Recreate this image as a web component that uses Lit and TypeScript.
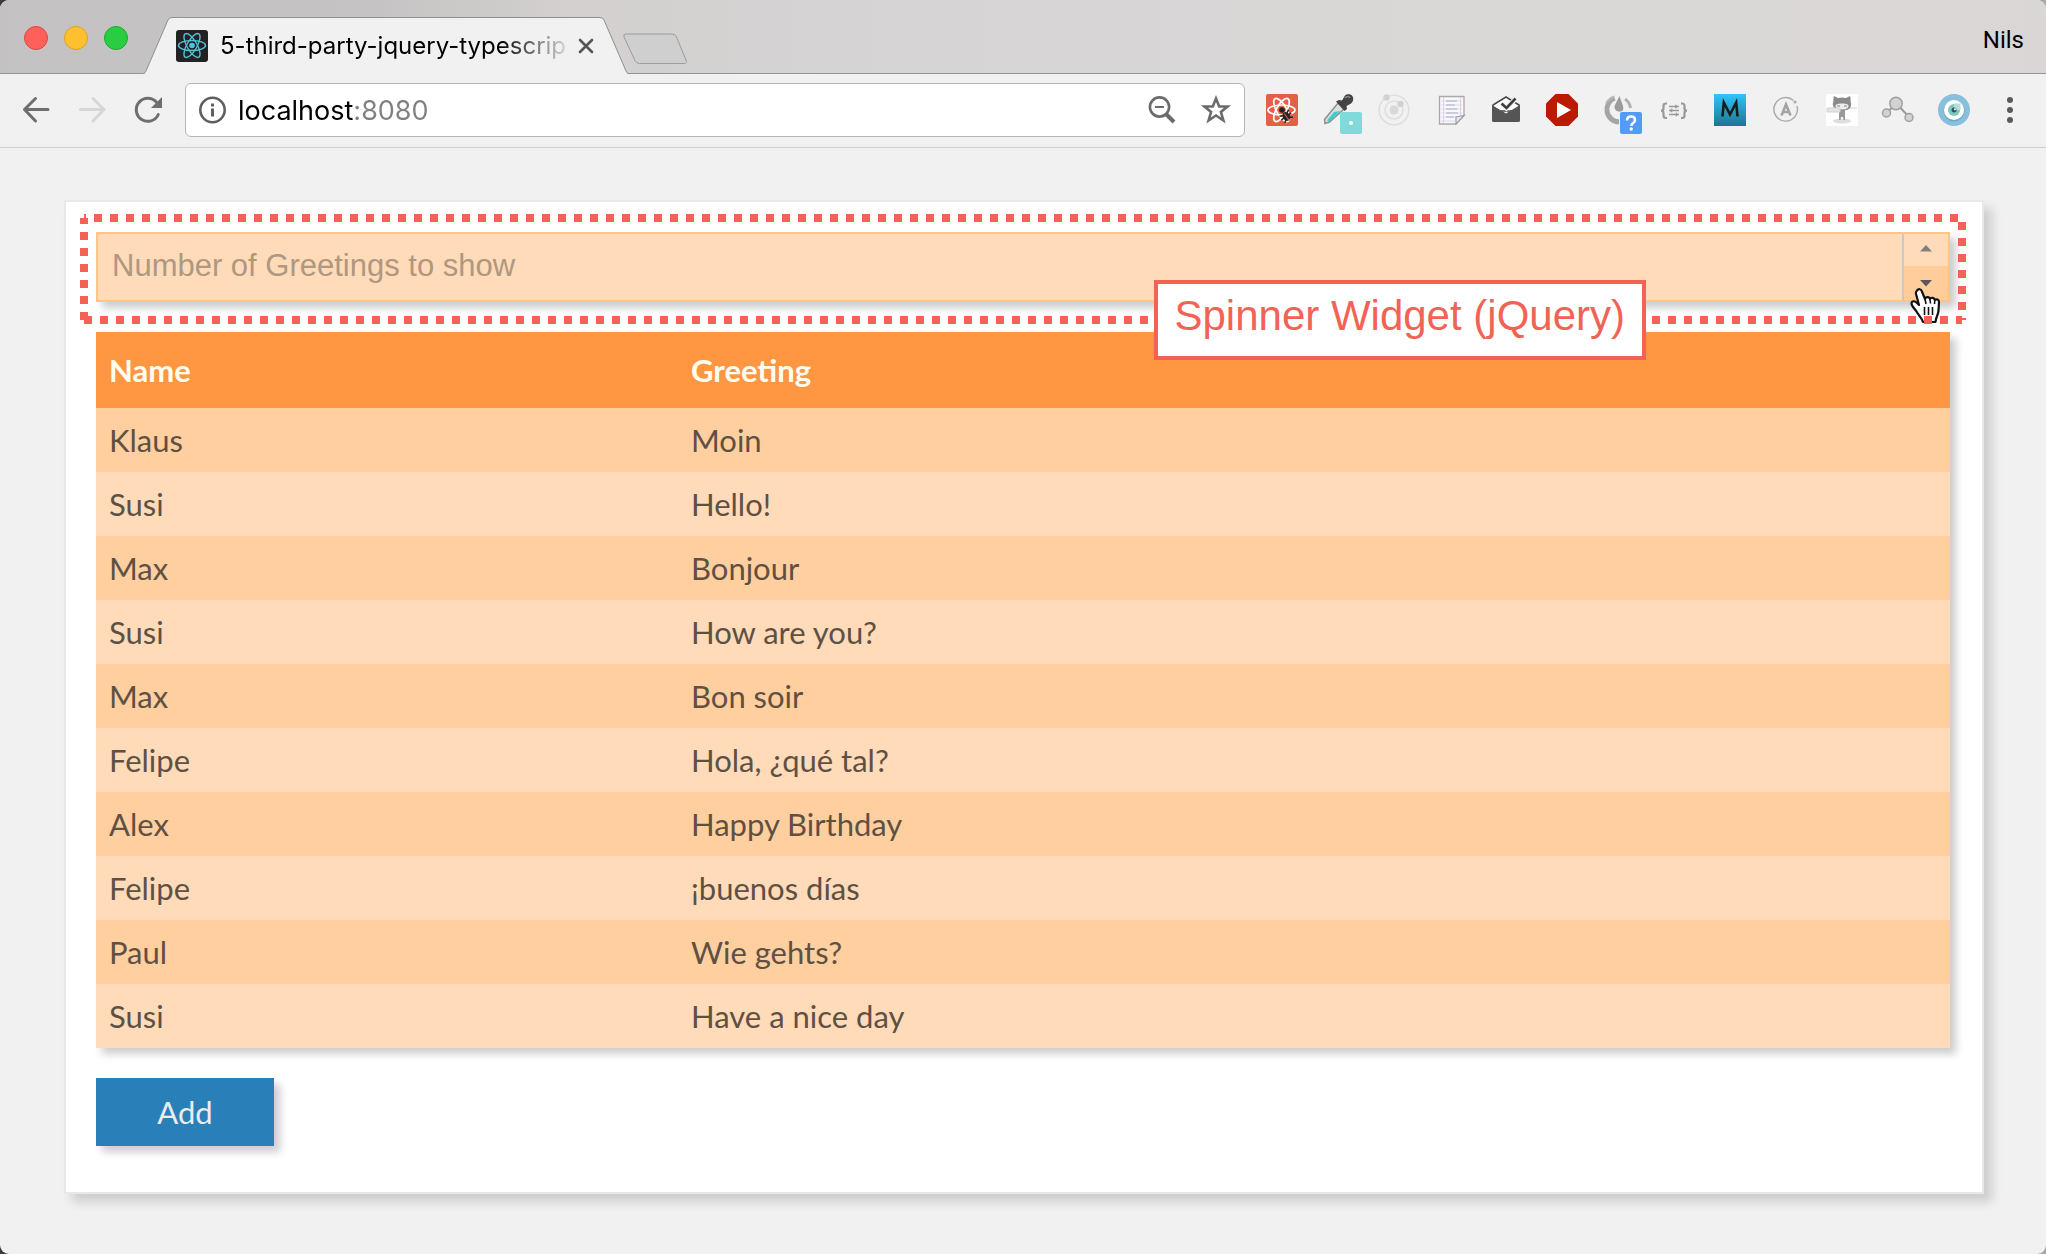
import { LitElement, html, svg, css } from "lit";
import { customElement, property, state } from "lit/decorators.js";

const FAVICON = svg`
  <rect width="32" height="32" rx="3" fill="#222"/>
  <g fill="none" stroke="#53c1de" stroke-width="1.4">
    <ellipse cx="16" cy="15.500" rx="13.500" ry="5"/>
    <ellipse cx="16" cy="15.500" rx="13.500" ry="5" transform="rotate(60 16 15.500)"/>
    <ellipse cx="16" cy="15.500" rx="13.500" ry="5" transform="rotate(120 16 15.500)"/>
  </g>
  <circle cx="16" cy="15.500" r="2.800" fill="#53c1de"/>`;

const BACK = svg`<path d="M28 15.500H4.500M15.500 4.500 4.500 15.500l11 11.500" fill="none" stroke="#6e6e6e" stroke-width="3" stroke-linecap="round" stroke-linejoin="round"/>`;
const FORWARD = svg`<path d="M4.500 15.500H28M17 4.500 28 15.500 17 27" fill="none" stroke="#d6d6d6" stroke-width="3" stroke-linecap="round" stroke-linejoin="round"/>`;
const RELOAD = svg`
  <path d="M26.300 20.500A11.500 11.500 0 1 1 24.500 8.300" fill="none" stroke="#6e6e6e" stroke-width="3" stroke-linecap="round"/>
  <path d="M30 3v11H19z" fill="#6e6e6e"/>`;
const INFO = svg`
  <circle cx="13.500" cy="14" r="12.200" fill="none" stroke="#5f5f5f" stroke-width="2.600"/>
  <path d="M12 12.500h3v8h-3zM12 7.500h3v3h-3z" fill="#5f5f5f"/>`;
const ZOOM_OUT = svg`
  <circle cx="11.500" cy="11" r="9.600" fill="none" stroke="#6b6b6b" stroke-width="2.600"/>
  <path d="M7 11h9" stroke="#6b6b6b" stroke-width="2"/>
  <path d="M18 18l8 8" stroke="#6b6b6b" stroke-width="4"/>`;
const STAR = svg`<path d="M14 2.500l3.200 8h8.300l-6.600 5.400 2.500 8.600-7.400-5-7.400 5 2.500-8.600L2.500 10.500h8.300z" fill="none" stroke="#6b6b6b" stroke-width="2.600"/>`;

interface Extension {
  label: string;
  art: unknown;
}

const EXTENSIONS: Extension[] = [
  {
    label: "React debugger",
    art: svg`
      <rect width="32" height="32" rx="2" fill="#e35f47"/>
      <g fill="none" stroke="#fff" stroke-width="1.700">
        <ellipse cx="15.500" cy="16" rx="13.500" ry="5"/>
        <ellipse cx="15.500" cy="16" rx="13" ry="5" transform="rotate(60 15.500 16)"/>
        <ellipse cx="15.500" cy="16" rx="13" ry="5" transform="rotate(120 15.500 16)"/>
      </g>
      <circle cx="16" cy="16" r="2.800" fill="#272324"/>
      <g transform="rotate(-35 20 22)">
        <ellipse cx="20" cy="22.500" rx="3.600" ry="4.600" fill="#272324"/>
        <path d="M14.500 18.500l3 1.500M14 22.500H26M15 27l3-2M25.500 18.500l-3 1.500M25 27l-3-2" stroke="#272324" stroke-width="1.600"/>
        <path d="M20 19v8" stroke="#e35f47" stroke-width="1"/>
      </g>`,
  },
  {
    label: "Colour picker",
    art: svg`
      <path d="M3 29.500l-.500-4L16 9l6 6L7.500 28z" fill="#d9dede" stroke="#8b8f8f" stroke-width="1.500"/>
      <path d="M5 26.500L12 18l6-1L7.500 27.500z" fill="#35cfd0"/>
      <path d="M14 7.500l3-1.500 3 .500L23 1.500c2-2 5.500-1.500 7 0 2 2.500 1.500 6-1 8L24.500 12l.500 3-2.500 2z" fill="#434343"/>
      <path d="M23 4c2-2 4-2 5 0" stroke="#8c8c8c" stroke-width="1.500" fill="none"/>
      <rect x="18" y="18" width="22" height="22" rx="2" fill="#80dada"/>
      <circle cx="29" cy="29" r="2" fill="#fff"/>`,
  },
  {
    label: "Orbit",
    art: svg`
      <g fill="none" stroke="#dedede" stroke-width="1.600">
        <circle cx="16" cy="16" r="14.800"/>
        <circle cx="16" cy="16" r="9"/>
      </g>
      <circle cx="16" cy="16" r="4.500" fill="#d9d9d9"/>
      <circle cx="8.500" cy="3.500" r="3.200" fill="#d2d2d2"/>
      <circle cx="22.500" cy="10" r="3.200" fill="#d2d2d2"/>`,
  },
  {
    label: "Notes",
    art: svg`
      <g transform="translate(2 0)">
        <path d="M3.500 2.500h24.500v19l-8 8.500H3.500z" fill="#f8f8fb" stroke="#a9a9a9" stroke-width="1.300"/>
        <path d="M5 7h21M5 11h21M5 15h21M5 19h21M5 23h16M5 27h14" stroke="#d6dbee" stroke-width="1"/>
        <path d="M7.500 3v26M24.500 3v19" stroke="#ecc9e8" stroke-width="1"/>
        <path d="M10 7h11M10 11h9M10 15h11M10 19h12M10 23h8" stroke="#c0c4d0" stroke-width="1.300"/>
        <path d="M28 21.500l-8 8.500v-7z" fill="#eaeaea" stroke="#a0a0a0" stroke-width="1.200"/>
      </g>`,
  },
  {
    label: "Mail checker",
    art: svg`
      <path d="M3 11L16 3l13 8v6H3z" fill="#fff" stroke="#4a4a4a" stroke-width="1.500"/>
      <path d="M2 11l14 8.500L30 11v15.500q0 1.500-1.500 1.500h-25Q2 28 2 26.500z" fill="#555"/>
      <path d="M12 9.500l4.500 4.500L26 4.500" fill="none" stroke="#f1f1f1" stroke-width="5"/>
      <path d="M11.500 9.500l5 4.500L25.500 4.500" fill="none" stroke="#3f3f3f" stroke-width="2.600"/>`,
  },
  {
    label: "Video player",
    art: svg`
      <path d="M9.500 0h13L32 9.500v13L22.500 32h-13L0 22.500v-13z" fill="#bb1a00"/>
      <path d="M11 8l14 8-14 8z" fill="#fff"/>`,
  },
  {
    label: "Page status",
    art: svg`
      <path d="M12.500 4A12.500 12.500 0 0 0 17 28" fill="none" stroke="#a5a5a5" stroke-width="5"/>
      <path d="M12.500 2.500Q7 4.500 4 9" fill="none" stroke="#b8b8b8" stroke-width="2"/>
      <path d="M23 5A13 13 0 0 1 28.500 14" fill="none" stroke="#b2b2b2" stroke-width="3"/>
      <path d="M17.500 2l3.500 10c1 5-1.500 6-4.500 5.500s-5-3.500-3.500-6.500z" fill="#9c9c9c"/>
      <rect x="18" y="18" width="22" height="22" rx="2" fill="#529bf8"/>
      <path d="M25 26.500q0-4 4-4t4 3.500q0 2-2 3.200-1.700 1-1.700 2.800" fill="none" stroke="#fff" stroke-width="2.600"/>
      <circle cx="29.200" cy="35" r="1.700" fill="#fff"/>`,
  },
  {
    label: "JSON viewer",
    art: svg`
      <g fill="none" stroke="#999" stroke-width="2.200">
        <path d="M9 9.500H8q-2.500 0-2.500 2.500v2.500q0 2.200-2.500 2.200 2.500 0 2.500 2.300v2.500Q5.500 24 8 24h1"/>
        <path d="M23 9.500h1q2.500 0 2.500 2.500v2.500q0 2.200 2.500 2.200-2.500 0-2.500 2.300v2.500q0 2.500-2.500 2.500h-1"/>
      </g>
      <path d="M11 12.500h10M11 16.500h10M11 20.500h10M18 10.800v3.400M13.500 14.800v3.400M18.500 18.800v3.400" stroke="#999" stroke-width="1.600"/>`,
  },
  {
    label: "Markdown",
    art: svg`
      <defs><linearGradient id="md" x2="0" y2="1"><stop stop-color="#30c5fb"/><stop offset="1" stop-color="#1c7592"/></linearGradient></defs>
      <rect width="32" height="32" fill="url(#md)"/>
      <path d="M8.500 22.500L9.800 8.500 16 20.500 22.200 8.500 23.500 22.500" fill="none" stroke="#1b1b1b" stroke-width="2.600"/>`,
  },
  {
    label: "Apollo tools",
    art: svg`
      <path d="M23.500 6.500A11.800 11.800 0 1 0 27 12" fill="none" stroke="#a8a8a8" stroke-width="1.400"/>
      <circle cx="25" cy="8" r="1.500" fill="#a8a8a8"/>
      <path d="M11.500 21.500l4.500-11 4.500 11M13.500 18h5" fill="none" stroke="#a4a4a4" stroke-width="2.600"/>`,
  },
  {
    label: "Octocat",
    art: svg`
      <rect width="32" height="32" fill="#fff"/>
      <ellipse cx="16" cy="27" rx="9" ry="2.600" fill="#dedede"/>
      <path d="M13 16h6v10h-1.500l-.500-3h-2l-.500 3H13zM12 20l-3-1" fill="#9a9a9a"/>
      <path d="M8 2l4 2q4-1 8 0l4-2q1 3 .500 5 1.500 3 0 6.500-1.500 3-8.500 3t-8.500-3q-1.500-3.500 0-6.500Q7 5 8 2z" fill="#8a8a8a"/>
      <path d="M9.500 11q2-2 6.500-1.500 4.500-.500 6.500 1.500.500 4.500-6.500 4.500T9.500 11z" fill="#ededed"/>
      <path d="M11 12h3M18 12h3" stroke="#888" stroke-width="1"/>
      <path d="M1 14h13v4H1zM24 14h7" fill="#e4e4e4" stroke="#d4d4d4" stroke-width="1"/>`,
  },
  {
    label: "Graph",
    art: svg`
      <path d="M5 19L14 9l13 14" fill="none" stroke="#999" stroke-width="2"/>
      <g fill="#d2d2d2" stroke="#a0a0a0" stroke-width="1.500">
        <circle cx="14" cy="9.500" r="6.200"/>
        <circle cx="4.500" cy="19" r="4"/>
        <circle cx="27" cy="23.500" r="4"/>
      </g>`,
  },
  {
    label: "Ghost eye",
    art: svg`
      <circle cx="16" cy="16" r="16" fill="#87bfdd"/>
      <circle cx="16" cy="17" r="10.500" fill="#6fa9c8"/>
      <circle cx="16" cy="16" r="10" fill="#fff"/>
      <circle cx="16" cy="16" r="6" fill="#7bcbb8"/>
      <path d="M16 16V9.500h6.500V16z" fill="#b4e0d6"/>
      <circle cx="16" cy="16" r="2.500" fill="#33566e"/>
      <circle cx="17" cy="15.300" r="1" fill="#fff"/>`,
  },
];

const MENU = svg`<g fill="#5a5a5a"><circle cx="16" cy="6" r="3"/><circle cx="16" cy="16" r="3"/><circle cx="16" cy="26" r="3"/></g>`;

const svg32 = (art: unknown) => html`<svg class="icon" viewBox="0 0 32 32" aria-hidden="true">${art}</svg>`;
const svg28 = (art: unknown) => html`<svg class="icon small" viewBox="0 0 28 28" aria-hidden="true">${art}</svg>`;

const resets = css`
  * { box-sizing: border-box; }
  button, input {
    margin: 0;
    padding: 0;
    border: 0;
    border-radius: 0;
    background: none;
    font: inherit;
    color: inherit;
    outline: 0;
  }
  button { cursor: pointer; }
`;

@customElement("browser-bar")
export class BrowserBar extends LitElement {
  static styles = [
    resets,
    css`
      :host {
        display: block;
        font-family: Inter, "Liberation Sans", sans-serif;
        color: #000;
      }
      .titlebar {
        display: flex;
        align-items: flex-end;
        height: 74px;
        padding: 0 22px 0 24px;
        background: linear-gradient(90deg, #c3c1c1 0, #c5c3c3 18%, #d3d0cf 28%, #d6d4d5 45%, #d9d8d6 75%, #dad6d6);
        box-shadow: inset 0 -1px #959393;
      }
      .lights {
        display: flex;
        gap: 16px;
        margin: 0 16px 24px 0;
      }
      .light {
        width: 24px;
        height: 24px;
        border: 1px solid #e2463f;
        border-radius: 50%;
        background: #ff6059;
      }
      .light.minimise { border-color: #dfa023; background: #ffc02f; }
      .light.zoom { border-color: #1aab2c; background: #29cd42; }
      .tab {
        position: relative;
        display: flex;
        align-items: center;
        flex: 0 1 484px;
        min-width: 0;
        height: 57px;
        padding: 0 28px 0 32px;
      }
      .tab-shape {
        position: absolute;
        inset: 0;
        width: 100%;
        height: 100%;
      }
      .favicon, .title, .close { position: relative; }
      .title {
        flex: 1;
        min-width: 0;
        margin-left: 12px;
        white-space: nowrap;
        font-size: 24px;
        line-height: 32px;
        -webkit-mask-image: linear-gradient(90deg, #000 80%, transparent 102%);
        mask-image: linear-gradient(90deg, #000 80%, transparent 102%);
      }
      .close { display: flex; margin-left: 4px; }
      .new-tab {
        display: flex;
        margin: 0 auto 9px -6px;
      }
      .profile {
        align-self: center;
        padding-top: 6px;
        font-family: Roboto, "Liberation Sans", sans-serif;
        font-size: 24px;
        font-weight: 400;
        line-height: 28px;
      }
      .toolbar {
        display: flex;
        align-items: center;
        gap: 21px;
        height: 74px;
        padding: 0 20px 1px;
        background: #f1f1f1;
        border-bottom: 1px solid #d0d0d0;
      }
      .group { display: flex; gap: 24px; }
      .tool { display: flex; }
      .icon {
        display: block;
        flex: none;
        width: 32px;
        height: 32px;
        overflow: visible;
      }
      .icon.small { width: 28px; height: 28px; }
      .address {
        display: flex;
        align-items: center;
        flex: 1;
        min-width: 0;
        height: 54px;
        padding: 0 14px 0 13px;
        background: #fff;
        border: 1px solid #b5b5b5;
        border-radius: 6px;
      }
      .url {
        flex: 1;
        min-width: 0;
        margin: 0 12px 0 11px;
        padding-top: 2px;
        font-family: Inter, "Liberation Sans", sans-serif;
        font-size: 27px;
        line-height: 40px;
        color: transparent;
        caret-color: #000;
        background: linear-gradient(90deg, #000 115px, #808080 115px);
        -webkit-background-clip: text;
        background-clip: text;
      }
      .actions { display: flex; gap: 26px; }
    `,
  ];

  render() {
    return html`
      <div class="titlebar">
        <div class="lights">
          <button class="light" aria-label="Close window"></button>
          <button class="light minimise" aria-label="Minimise window"></button>
          <button class="light zoom" aria-label="Zoom window"></button>
        </div>
        <div class="tab">
          <svg class="tab-shape" viewBox="0 0 484 57" preserveAspectRatio="none" aria-hidden="true">
            <path d="M0 57q1-1 2-3L24 3q1-2.500 4-2.500h428q3 0 4 2.500l22 51q1 2 2 3z" fill="#f1f1f1"/>
            <path d="M0 56.500q1-.500 2-2.500L24 3q1-2.500 4-2.500h428q3 0 4 2.500l22 51q1 2 2 2.500" fill="none" stroke="#8f8f8f"/>
          </svg>
          <svg class="icon favicon" viewBox="0 0 32 32" aria-hidden="true">${FAVICON}</svg>
          <span class="title">5-third-party-jquery-typescrip</span>
          <button class="close" aria-label="Close tab">
            <svg class="icon small" viewBox="0 0 28 28"><path d="M8 8l12 12M20 8L8 20" stroke="#555" stroke-width="2.600" stroke-linecap="round"/></svg>
          </button>
        </div>
        <button class="new-tab" aria-label="New tab">
          <svg width="66" height="32" viewBox="0 0 66 32">
            <path d="M4 1h46q3 0 4.500 3L64 27q1.500 3.500-1.500 3.500h-45q-3 0-4.500-3L2 4Q1 1 4 1z" fill="#cfcfcf" stroke="#9c9c9c"/>
          </svg>
        </button>
        <button class="profile">Nils</button>
      </div>
      <div class="toolbar">
        <div class="group">
          <button class="tool" aria-label="Back">${svg32(BACK)}</button>
          <button class="tool" aria-label="Forward">${svg32(FORWARD)}</button>
          <button class="tool" aria-label="Reload">${svg32(RELOAD)}</button>
        </div>
        <div class="address">
          ${svg28(INFO)}
          <input class="url" type="text" aria-label="Address" .value=${"localhost:8080"} />
          <div class="actions">
            <button class="tool" aria-label="Zoom">${svg28(ZOOM_OUT)}</button>
            <button class="tool" aria-label="Bookmark">${svg28(STAR)}</button>
          </div>
        </div>
        <div class="group">
          ${EXTENSIONS.map((e) => html`<button class="tool" aria-label=${e.label}>${svg32(e.art)}</button>`)}
          <button class="tool" aria-label="Menu">${svg32(MENU)}</button>
        </div>
      </div>
    `;
  }
}

@customElement("greeting-spinner")
export class GreetingSpinner extends LitElement {
  @property() placeholder = "";
  @state() private value = "";

  static styles = [
    resets,
    css`
      :host { display: block; position: relative; }
      .spinner {
        display: flex;
        height: 70px;
        background: #ffdbba;
        border: 2px solid #ffc488;
        box-shadow: 6px 6px 8px rgba(0, 0, 0, 0.2);
      }
      .count {
        flex: 1;
        min-width: 0;
        padding: 0 14px 2px;
        font-family: "Liberation Sans", Arial, sans-serif;
        font-size: 31px;
        color: #5d4f44;
      }
      .count::placeholder { color: #b0977f; opacity: 1; }
      .steps {
        display: flex;
        flex-direction: column;
        width: 46px;
        border-left: 2px solid #c8c8c8;
      }
      .step {
        display: flex;
        flex: 1;
        align-items: flex-start;
        justify-content: center;
        padding-top: 11px;
      }
      .step.active {
        padding-top: 14px;
        background: #ffcd9c;
      }
      .outline {
        position: absolute;
        inset: -14px -12px -18px;
        pointer-events: none;
      }
      .outline svg {
        display: block;
        width: 100%;
        height: 100%;
        overflow: visible;
      }
      .outline line {
        stroke: #f26355;
        stroke-width: 8px;
        stroke-dasharray: 8px 8px;
      }
      .callout {
        position: absolute;
        top: 48px;
        right: 304px;
        padding: 8px 17px 16px;
        background: #fff;
        border: 4px solid #f26355;
        font-family: "Liberation Sans", Arial, sans-serif;
        font-size: 42px;
        line-height: 48px;
        color: #f26355;
        white-space: nowrap;
      }
      .pointer {
        position: absolute;
        top: 55px;
        right: 7px;
        width: 34px;
        height: 38px;
        pointer-events: none;
      }
    `,
  ];

  private step(delta: number) {
    this.value = String(Math.max(0, (Number(this.value) || 0) + delta));
  }

  render() {
    return html`
      <div class="spinner">
        <input
          class="count"
          type="text"
          aria-label=${this.placeholder}
          placeholder=${this.placeholder}
          .value=${this.value}
          @input=${(e: Event) => (this.value = (e.target as HTMLInputElement).value)}
        />
        <div class="steps">
          <button class="step" aria-label="Increase" @click=${() => this.step(1)}>
            <svg width="12" height="7" viewBox="0 0 12 7"><path d="M6 0l6 6.500H0z" fill="#808080"/></svg>
          </button>
          <button class="step active" aria-label="Decrease" @click=${() => this.step(-1)}>
            <svg width="12" height="7" viewBox="0 0 12 7"><path d="M0 0h12L6 6.500z" fill="#5a5a5a"/></svg>
          </button>
        </div>
      </div>
      <svg class="pointer" viewBox="0 0 34 38" aria-hidden="true">
        <path
          d="M8 3.500c1.500-2 4-1.500 4.700.500L16 12c.500-2.500 4.500-2.500 5 0 1-2 4.500-1.500 4.800 1 1.500-1.500 4.200-.500 4.200 2l-.500 9c-.500 4-2.500 6-3 11H14c-1-4-4-6-6.500-10.500-2-3-5-5.500-5-8 0-2.500 3-3 5-1l2.500 2.500L7 7c-.500-1.500 0-2.500 1-3.500z"
          fill="#fff" stroke="#111" stroke-width="2.200" stroke-linejoin="round"/>
        <path d="M15.500 20v8M19.500 20v8M23.500 20v8M16 12l1 5M21 12.500l.500 4M25.800 13.500l-.300 3.500" stroke="#111" stroke-width="1.600"/>
      </svg>
      <div class="outline">
        <svg aria-hidden="true">
          <line x1="0" y1="100%" x2="0" y2="0"/>
          <line x1="0" y1="0" x2="100%" y2="0" stroke-dashoffset="6"/>
          <line x1="100%" y1="0" x2="100%" y2="100%" stroke-dashoffset="12"/>
          <line x1="100%" y1="100%" x2="0" y2="100%" stroke-dashoffset="2"/>
        </svg>
      </div>
      <div class="callout">Spinner Widget (jQuery)</div>
    `;
  }
}

interface Greeting {
  name: string;
  greeting: string;
}

@customElement("app-root")
export class AppRoot extends LitElement {
  @state() private greetings: Greeting[] = [
    { name: "Klaus", greeting: "Moin" },
    { name: "Susi", greeting: "Hello!" },
    { name: "Max", greeting: "Bonjour" },
    { name: "Susi", greeting: "How are you?" },
    { name: "Max", greeting: "Bon soir" },
    { name: "Felipe", greeting: "Hola, ¿qué tal?" },
    { name: "Alex", greeting: "Happy Birthday" },
    { name: "Felipe", greeting: "¡buenos días" },
    { name: "Paul", greeting: "Wie gehts?" },
    { name: "Susi", greeting: "Have a nice day" },
  ];

  static styles = [
    resets,
    css`
      :host {
        display: block;
        min-height: 100vh;
        background: linear-gradient(100deg, #3c3c40 0 40%, #a9a7a5 60%);
        font-family: Lato, "Liberation Sans", sans-serif;
      }
      .window {
        display: flex;
        flex-direction: column;
        min-height: 100vh;
        overflow: hidden;
        border-radius: 9px;
        background: #f1f1f1;
      }
      .page { padding: 52px 62px 60px 64px; }
      .card {
        display: flex;
        flex-direction: column;
        align-items: stretch;
        gap: 30px;
        padding: 30px 32px 46px 30px;
        background: #fff;
        border: 2px solid #e8e8e8;
        box-shadow: 8px 8px 10px rgba(0, 0, 0, 0.15);
      }
      .spinner { z-index: 1; }
      .greetings {
        width: 100%;
        table-layout: fixed;
        border-collapse: collapse;
        box-shadow: 6px 6px 8px rgba(0, 0, 0, 0.2);
        font-size: 31px;
        line-height: 40px;
        color: #5f5044;
      }
      .name-column { width: 582px; }
      th, td { padding: 12px 13px; text-align: left; }
      th {
        height: 76px;
        background: #ff9642;
        color: #fffdf0;
        font-weight: 700;
      }
      td { height: 64px; }
      tbody tr { background: #ffdbba; }
      tbody tr:nth-child(odd) { background: #ffcf9f; }
      .add {
        align-self: flex-start;
        width: 178px;
        height: 68px;
        background: #2980b9;
        box-shadow: 6px 6px 8px rgba(0, 0, 0, 0.2);
        color: #ececec;
        font-size: 31px;
        line-height: 40px;
      }
    `,
  ];

  render() {
    return html`
      <div class="window">
        <browser-bar></browser-bar>
        <main class="page">
          <section class="card">
            <greeting-spinner class="spinner" placeholder="Number of Greetings to show"></greeting-spinner>
            <table class="greetings">
              <colgroup><col class="name-column" /><col /></colgroup>
              <thead>
                <tr><th scope="col">Name</th><th scope="col">Greeting</th></tr>
              </thead>
              <tbody>
                ${this.greetings.map((g) => html`<tr><td>${g.name}</td><td>${g.greeting}</td></tr>`)}
              </tbody>
            </table>
            <button class="add">Add</button>
          </section>
        </main>
      </div>
    `;
  }
}
